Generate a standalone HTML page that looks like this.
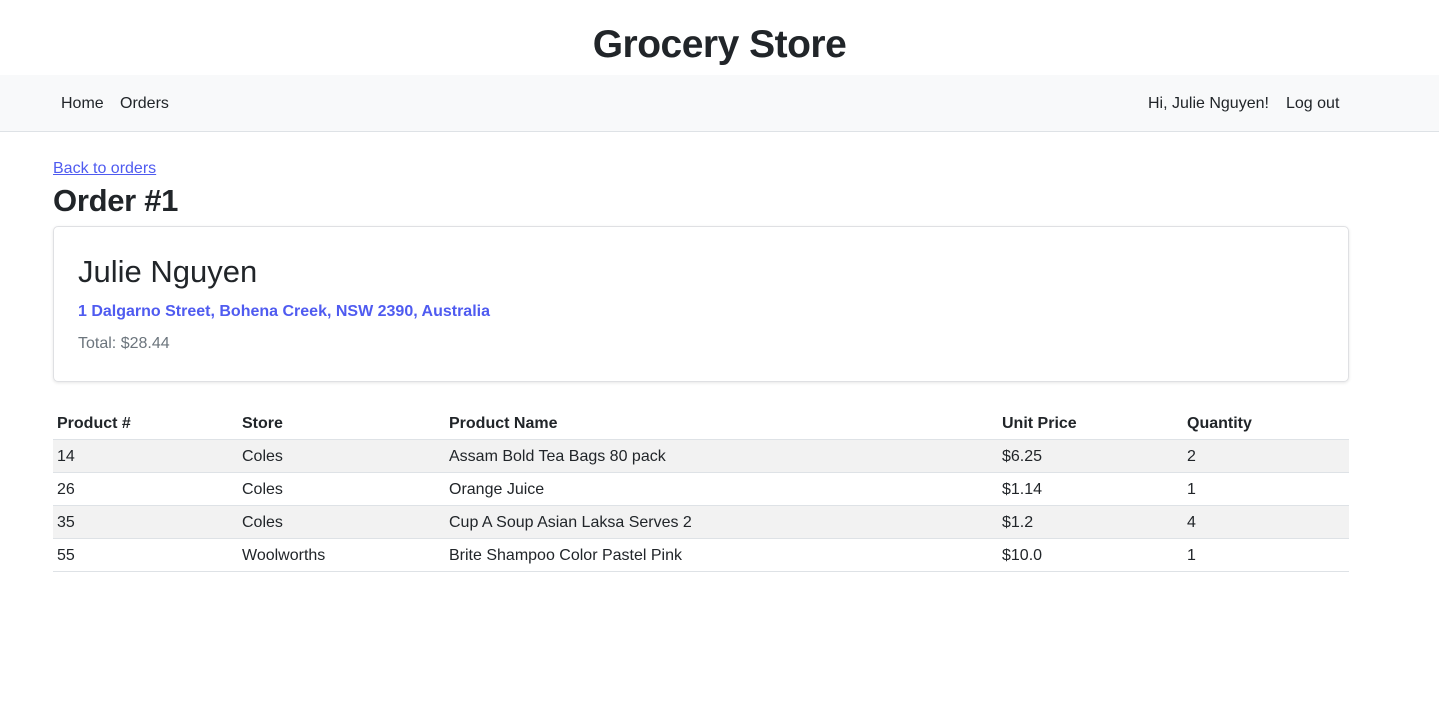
<!DOCTYPE html>
<html><head><meta charset="utf-8"><style>
*{box-sizing:border-box;margin:0;padding:0}
body{width:1439px;height:724px;font-family:"Liberation Sans",sans-serif;color:#212529;background:#fff;font-size:16px;overflow:hidden}
h1.t{text-align:center;font-size:39px;font-weight:bold;height:75px;line-height:90px;letter-spacing:-0.5px}
nav{background:#f8f9fa;height:57px;border-bottom:1px solid #dee2e6;position:relative}
nav span{position:absolute;top:20px;font-size:16px}
.wrap{position:absolute;left:53px;width:1296px}
a{color:#4f5bf0}
.card{position:absolute;left:53px;top:226px;width:1296px;height:156px;border:1px solid #dfe0e3;border-radius:5px;box-shadow:0 1px 3px rgba(0,0,0,.1)}
table{position:absolute;left:53px;top:407px;width:1296px;border-collapse:collapse}
td,th{text-align:left;padding:2px 4px 0;height:33px;font-size:16px;border-bottom:1px solid #dee2e6}
th{font-weight:bold}
tr:first-child th{height:32px}
tr.s td{background:#f2f2f2}
</style></head><body>
<h1 class="t">Grocery Store</h1>
<nav><span style="left:61px">Home</span><span style="left:120px">Orders</span><span style="left:1148px">Hi, Julie Nguyen!</span><span style="left:1286px">Log out</span></nav>
<a class="wrap" style="top:160px;width:auto" href="#">Back to orders</a>
<div class="wrap" style="top:183px;font-size:31px;font-weight:bold;letter-spacing:-0.3px">Order #1</div>
<div class="card">
<div style="position:absolute;left:24px;top:27px;font-size:31px;font-weight:500">Julie Nguyen</div>
<div style="position:absolute;left:24px;top:76px;font-weight:bold;color:#4f5bf0">1 Dalgarno Street, Bohena Creek, NSW 2390, Australia</div>
<div style="position:absolute;left:24px;top:108px;color:#6c757d">Total: $28.44</div>
</div>
<table>
<tr><th style="width:185px">Product #</th><th style="width:207px">Store</th><th style="width:553px">Product Name</th><th style="width:185px">Unit Price</th><th>Quantity</th></tr>
<tr class="s"><td>14</td><td>Coles</td><td>Assam Bold Tea Bags 80 pack</td><td>$6.25</td><td>2</td></tr>
<tr><td>26</td><td>Coles</td><td>Orange Juice</td><td>$1.14</td><td>1</td></tr>
<tr class="s"><td>35</td><td>Coles</td><td>Cup A Soup Asian Laksa Serves 2</td><td>$1.2</td><td>4</td></tr>
<tr><td>55</td><td>Woolworths</td><td>Brite Shampoo Color Pastel Pink</td><td>$10.0</td><td>1</td></tr>
</table>
</body></html>
